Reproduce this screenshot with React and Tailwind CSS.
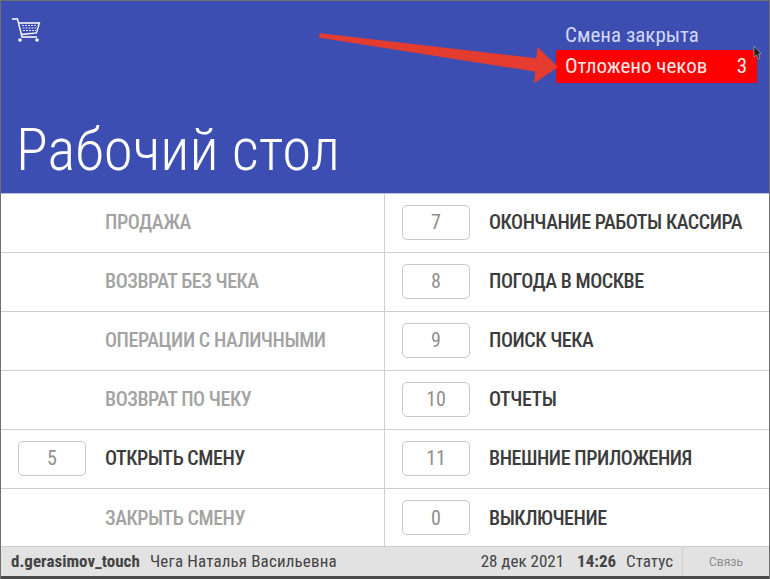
const font = { fontFamily: "Roboto, sans-serif" };

function Key({ children }) {
  return (
    <div className="w-[68px] h-[35px] shrink-0 rounded-[5px] border border-[#c8c8c8] bg-white flex items-center justify-center text-[20px] text-[#8f8f8f] [font-stretch:75%]">
      {children}
    </div>
  );
}

function Row({ k, label, enabled, last }) {
  return (
    <div className={`flex items-center h-[59px] pb-[2px] pl-[17px] gap-[19px] ${last ? "" : "border-b border-[#cfcfcf]"}`}>
      {k !== undefined ? <Key>{k}</Key> : <div className="w-[68px] shrink-0" />}
      <span className={`text-[20px] font-medium tracking-[-0.45px] [font-stretch:75%] whitespace-nowrap ${enabled ? "text-[#3c3c3c]" : "text-[#a3a3a3]"}`}>{label}</span>
    </div>
  );
}

const left = [
  { label: "ПРОДАЖА" },
  { label: "ВОЗВРАТ БЕЗ ЧЕКА" },
  { label: "ОПЕРАЦИИ С НАЛИЧНЫМИ" },
  { label: "ВОЗВРАТ ПО ЧЕКУ" },
  { k: 5, label: "ОТКРЫТЬ СМЕНУ", enabled: true },
  { label: "ЗАКРЫТЬ СМЕНУ" },
];
const right = [
  { k: 7, label: "ОКОНЧАНИЕ РАБОТЫ КАССИРА", enabled: true },
  { k: 8, label: "ПОГОДА В МОСКВЕ", enabled: true },
  { k: 9, label: "ПОИСК ЧЕКА", enabled: true },
  { k: 10, label: "ОТЧЕТЫ", enabled: true },
  { k: 11, label: "ВНЕШНИЕ ПРИЛОЖЕНИЯ", enabled: true },
  { k: 0, label: "ВЫКЛЮЧЕНИЕ", enabled: true },
];

function Cart() {
  return (
    <svg width="30" height="26" viewBox="0 0 30 26" fill="none" stroke="#fff">
      <path d="M1 2 H6.5 L11 20 H26" strokeWidth="1.4" />
      <path d="M8 6 H28.5 L25.5 16 L10.5 17.5" strokeWidth="1.3" />
      <path d="M11 8.5 H26.5 M11.5 11 H26 M12 13.5 H25" strokeWidth="1.2" strokeDasharray="2 1" opacity="0.8" />
      <circle cx="9" cy="23" r="1.8" fill="#fff" stroke="none" />
      <circle cx="26" cy="23" r="1.8" fill="#fff" stroke="none" />
    </svg>
  );
}

export default function App() {
  return (
    <div className="relative w-[770px] h-[579px] bg-white overflow-hidden flex flex-col border-l border-t border-r border-[#6f6f6f]" style={font}>
      <header className="h-[192px] shrink-0 bg-[#3c4eb2] flex flex-col justify-between">
        <div className="flex justify-between pt-[13px]">
          <div className="pl-[10px] pt-[3px]"><Cart /></div>
          <div className="w-[201px] mr-[12px] mt-[7px] text-[21px] leading-[33px] [font-stretch:75%]">
            <div className="pl-[9px] text-[#d3d8f2] h-[29px] leading-[28px]">Смена закрыта</div>
            <div className="bg-[#ff0000] text-[#ffe9e9] h-[33px] pl-[9px] pr-[10px] flex justify-between">
              <span>Отложено чеков</span><span>3</span>
            </div>
          </div>
        </div>
        <h1 className="pl-[15px] pb-[12px] text-[59px] leading-[62px] text-white font-light [font-stretch:75%]">Рабочий стол</h1>
      </header>
      <main className="grid grid-cols-[384px_1fr] flex-1 min-h-0 border-t border-[#b9bfdc]">
        <div className="border-r border-[#cfcfcf]">
          {left.map((r, i) => <Row key={i} {...r} last={i === 5} />)}
        </div>
        <div>
          {right.map((r, i) => <Row key={i} {...r} last={i === 5} />)}
        </div>
      </main>
      <footer className="h-[33px] shrink-0 bg-[#e2e2e2] border-t border-[#cdcdcd] border-b-[3px] border-b-[#4a4a4a] flex items-center text-[17px] text-[#444444] pl-[10px] [font-stretch:75%]">
        <span className="font-bold w-[139px]">d.gerasimov_touch</span>
        <span className="tracking-[0.15px]">Чега Наталья Васильевна</span>
        <span className="ml-auto">28 дек 2021</span>
        <span className="font-bold ml-[13px]">14:26</span>
        <span className="ml-[10px] mr-[9px]">Статус</span>
        <div className="w-[87px] self-stretch border-l border-[#d0d0d0] flex items-center justify-center text-[12px] text-[#8c8c8c] [font-stretch:100%]">Связь</div>
      </footer>
      <svg className="absolute left-0 top-0 pointer-events-none" width="770" height="100" fill="none">
        <path d="M319 33 L536 58 L537 47.5 L556 66 L534 81 L535 70 L319 36 Z" fill="#e53c30" stroke="#e53c30" strokeWidth="1.5" strokeLinejoin="round" />
        <path d="M753 45 L753 56 L755.5 54 L757.5 58 L759 57 L757.5 53 L760 52.5 Z" fill="#222" stroke="#ddd" strokeWidth="0.5" />
      </svg>
    </div>
  );
}
